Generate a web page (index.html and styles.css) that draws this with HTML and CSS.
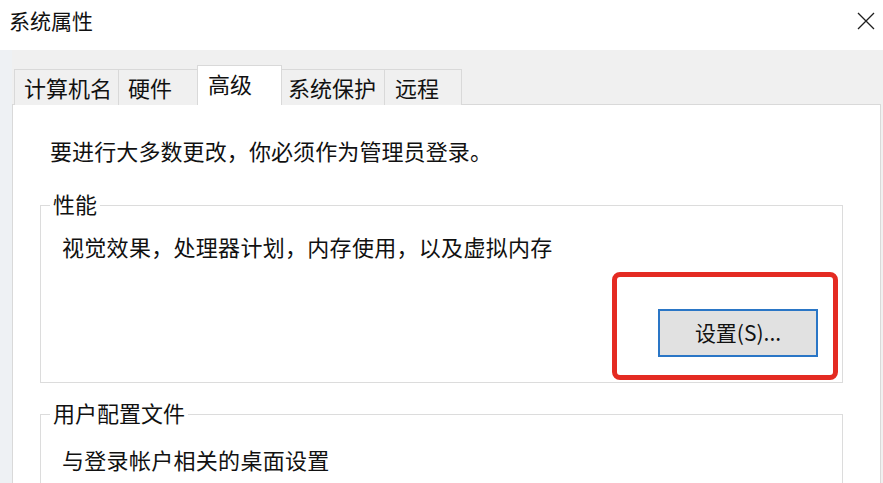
FILE: index.html
```html
<!DOCTYPE html>
<html lang="zh-CN">
<head>
<meta charset="utf-8">
<title>系统属性</title>
<link rel="stylesheet" href="styles.css">
</head>
<body>
<div class="window">
  <div class="titlebar">
    <span class="title">系统属性</span>
    <span class="close">
      <svg width="18" height="18" viewBox="0 0 18 18"><path d="M1 1 L17 17 M17 1 L1 17" stroke="#1e1e1e" stroke-width="1.3" fill="none"/></svg>
    </span>
  </div>
  <div class="content">
    <div class="tabs">
      <div class="tab tab-1">计算机名</div>
      <div class="tab tab-2">硬件</div>
      <div class="tab tab-3 active">高级</div>
      <div class="tab tab-4">系统保护</div>
      <div class="tab tab-5">远程</div>
    </div>
    <div class="panel">
      <p class="intro">要进行大多数更改，你必须作为管理员登录。</p>
      <fieldset class="group group-perf">
        <legend>性能</legend>
        <p class="desc">视觉效果，处理器计划，内存使用，以及虚拟内存</p>
        <div class="actions">
          <span class="btn-wrap">
            <button class="btn">设置(S)...</button>
            <span class="annot"></span>
          </span>
        </div>
      </fieldset>
      <fieldset class="group group-profile">
        <legend>用户配置文件</legend>
        <p class="desc">与登录帐户相关的桌面设置</p>
      </fieldset>
    </div>
  </div>
</div>
</body>
</html>
```

FILE: styles.css
```css
* { box-sizing: border-box; }
html, body { margin: 0; padding: 0; }
body {
  font-family: "Noto Sans CJK SC", "Noto Sans", sans-serif;
  color: #111;
  background: #f0f0f0;
}
.window {
  width: 883px;
  height: 483px;
  overflow: hidden;
  display: flex;
  flex-direction: column;
  background: #f0f0f0;
}
.titlebar {
  height: 50px;
  flex: none;
  background: #fff;
  display: flex;
  align-items: center;
  justify-content: space-between;
  padding: 0 8px 8px 9px;
}
.title {
  font-size: 21px;
  line-height: 28px;
  padding-bottom: 2px;
  color: #111;
}
.close {
  display: flex;
  width: 18px;
  height: 18px;
}
.content {
  flex: 1;
  display: flex;
  flex-direction: column;
  padding: 15px 2px 0 12px;
  background: linear-gradient(to right, #eef1f4 0, #eef1f4 12px, #f0f0f0 12px);
}
.tabs {
  display: flex;
  align-items: flex-end;
  height: 40px;
  margin-left: 2px;
  margin-bottom: -1px;
  position: relative;
  z-index: 1;
}
.tab {
  height: 36px;
  border: 1px solid #d9d9d9;
  border-bottom: none;
  background: #f0f0f0;
  padding: 1px 0 0 9px;
  font-size: 22px;
  line-height: 32px;
  color: #111;
  white-space: nowrap;
}
.tab + .tab { margin-left: -1px; }
.tab.active {
  height: 40px;
  background: #fff;
  padding-left: 10px;
  position: relative;
  z-index: 2;
}
.tab-1 { width: 105px; }
.tab-2 { width: 80px; }
.tab-3 { width: 85px; }
.tab-4 { width: 104px; padding-left: 6px; }
.tab-5 { width: 78px; padding-left: 10px; }
.panel {
  flex: 1;
  background: #fff;
  border: 1px solid #d9d9d9;
  border-bottom: none;
  padding: 30px 37px 0 27px;
}
.intro {
  margin: 0 0 28px 10px;
  font-size: 22px;
  line-height: 30px;
  letter-spacing: 0.1px;
}
.group {
  margin: 0;
  border: 1px solid #dcdcdc;
  padding: 14px 24px 25px 21px;
  min-width: 0;
}
.group legend {
  font-size: 22px;
  line-height: 20px;
  padding: 0 3px 4px;
  margin-left: -12px;
}
.group-profile {
  margin-top: 19px;
  padding-top: 18px;
}
.desc {
  margin: 0;
  font-size: 22px;
  line-height: 30px;
  letter-spacing: 0.3px;
}
.actions {
  display: flex;
  justify-content: flex-end;
  margin-top: 48px;
}
.btn-wrap {
  position: relative;
  display: inline-flex;
}
.btn {
  width: 160px;
  height: 48px;
  border: 2px solid #2a76c6;
  background: #e1e1e1;
  font-family: "Noto Sans CJK SC", "Noto Sans", sans-serif;
  font-size: 21px;
  line-height: 24px;
  color: #111;
  padding: 0 0 3px;
  margin: 0;
}
.annot {
  position: absolute;
  left: -46px;
  top: -37px;
  right: -20px;
  bottom: -23px;
  border: 5px solid #e42b22;
  border-radius: 8px;
}
```
